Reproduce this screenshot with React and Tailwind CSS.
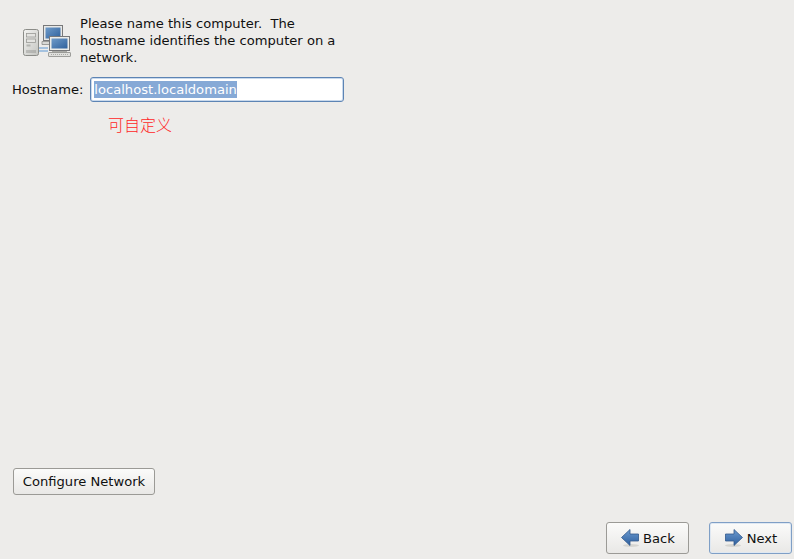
import React from "react";

function ComputersIcon() {
  return (
    <svg width="50" height="36" viewBox="0 0 50 36" className="block">
      <defs>
        <linearGradient id="tower" x1="0" y1="0" x2="1" y2="1">
          <stop offset="0" stopColor="#f4f4f2" />
          <stop offset="1" stopColor="#c4c5c1" />
        </linearGradient>
        <linearGradient id="scr" x1="0" y1="0" x2="1" y2="1">
          <stop offset="0" stopColor="#6f9bc9" />
          <stop offset="1" stopColor="#2f619d" />
        </linearGradient>
      </defs>
      <rect x="1.5" y="4.5" width="15" height="26" rx="2" fill="url(#tower)" stroke="#8b8c88" />
      <rect x="4.5" y="8.5" width="9" height="3.5" fill="#e4e4e1" stroke="#999a96" strokeWidth="0.8" />
      <rect x="4.5" y="14" width="9" height="3.5" fill="#e4e4e1" stroke="#999a96" strokeWidth="0.8" />
      <rect x="4.5" y="19.5" width="4" height="2" fill="#b4b5b1" />
      <path d="M5 25v3M7 25v3M9 25v3M11 25v3M13 25v3" stroke="#8b8c88" strokeWidth="0.8" />
      <path d="M17 23h9M17 26h9" stroke="#8db4dc" strokeWidth="1.3" />
      <rect x="21.5" y="0.5" width="19" height="15" fill="#e8e8e6" stroke="#77787a" />
      <rect x="23.5" y="2.5" width="15" height="11" fill="url(#scr)" />
      <path d="M20 16.5h9v3h-9z" fill="#d8d8d5" stroke="#8b8c88" strokeWidth="0.8" />
      <rect x="27.5" y="11.5" width="20" height="14" fill="#ecece9" stroke="#77787a" />
      <rect x="29.5" y="13.5" width="16" height="10" fill="url(#scr)" />
      <rect x="30" y="26" width="15" height="1.5" fill="#a9aaa6" />
      <rect x="26.5" y="27.5" width="22" height="4" rx="0.5" fill="#e0e0dd" stroke="#8b8c88" strokeWidth="0.8" />
      <path d="M29 29.5h17" stroke="#a9aaa6" strokeWidth="1" strokeDasharray="1 1" />
    </svg>
  );
}

function Arrow({ flip }) {
  return (
    <svg width="20" height="20" viewBox="0 0 20 20" className={flip ? "block -scale-x-100" : "block"}>
      <defs>
        <linearGradient id={flip ? "ar1" : "ar2"} x1="0" y1="0" x2="0" y2="1">
          <stop offset="0" stopColor="#6c9bd0" />
          <stop offset="1" stopColor="#2e5f9e" />
        </linearGradient>
      </defs>
      <ellipse cx="9" cy="17.5" rx="8" ry="1.5" fill="#d5d4d0" />
      <path d="M1.5 6h8.5V1.5L18.5 9.5 10 17.5V13H1.5z" fill={`url(#${flip ? "ar1" : "ar2"})`} stroke="#32598c" strokeWidth="0.8" strokeLinejoin="round" />
    </svg>
  );
}

const btn =
  "flex items-center justify-center rounded-[3px] border bg-gradient-to-b from-[#fbfbfa] to-[#e9e8e6] text-[#101010]";

export default function App() {
  return (
    <div className="flex h-[559px] w-[794px] flex-col overflow-hidden bg-[#edecea] text-[13.1px] leading-[17px] text-[#101010] [font-family:'DejaVu_Sans',sans-serif]">
      <div className="flex pl-[22px] pt-[15px]">
        <div className="pt-[10px]">
          <ComputersIcon />
        </div>
        <p className="ml-[8px] w-[262px]">
          Please name this computer.&nbsp; The hostname identifies the computer on a network.
        </p>
      </div>
      <div className="mt-[11px] flex items-center pl-[12px]">
        <span>Hostname:</span>
        <div className="ml-[7px] flex h-[25px] w-[254px] items-center rounded-[3px] border border-[#5d84b4] bg-white pl-[3px] shadow-[inset_0_0_0_1px_#c9d9ec]">
          <span className="bg-[#86a9d6] text-white">localhost.localdomain</span>
        </div>
      </div>
      <div className="mt-[12px] pl-[108px] text-[16px] leading-[20px] font-light text-[#ff1f1f] [font-family:'Noto_Sans_CJK_SC',sans-serif]">
        可自定义
      </div>
      <div className="mt-auto pl-[13px]">
        <button className={`${btn} h-[27px] w-[142px] border-[#9b9a96]`}>Configure Network</button>
      </div>
      <div className="mt-[27px] flex justify-end gap-[20px] pb-[5px] pr-[2px]">
        <button className={`${btn} h-[32px] w-[83px] gap-[3px] border-[#9b9a96]`}>
          <Arrow flip />
          Back
        </button>
        <button className={`${btn} h-[32px] w-[83px] gap-[3px] border-[#7f9fc6] shadow-[inset_0_0_0_1px_#dfe8f2]`}>
          <Arrow />
          Next
        </button>
      </div>
    </div>
  );
}
